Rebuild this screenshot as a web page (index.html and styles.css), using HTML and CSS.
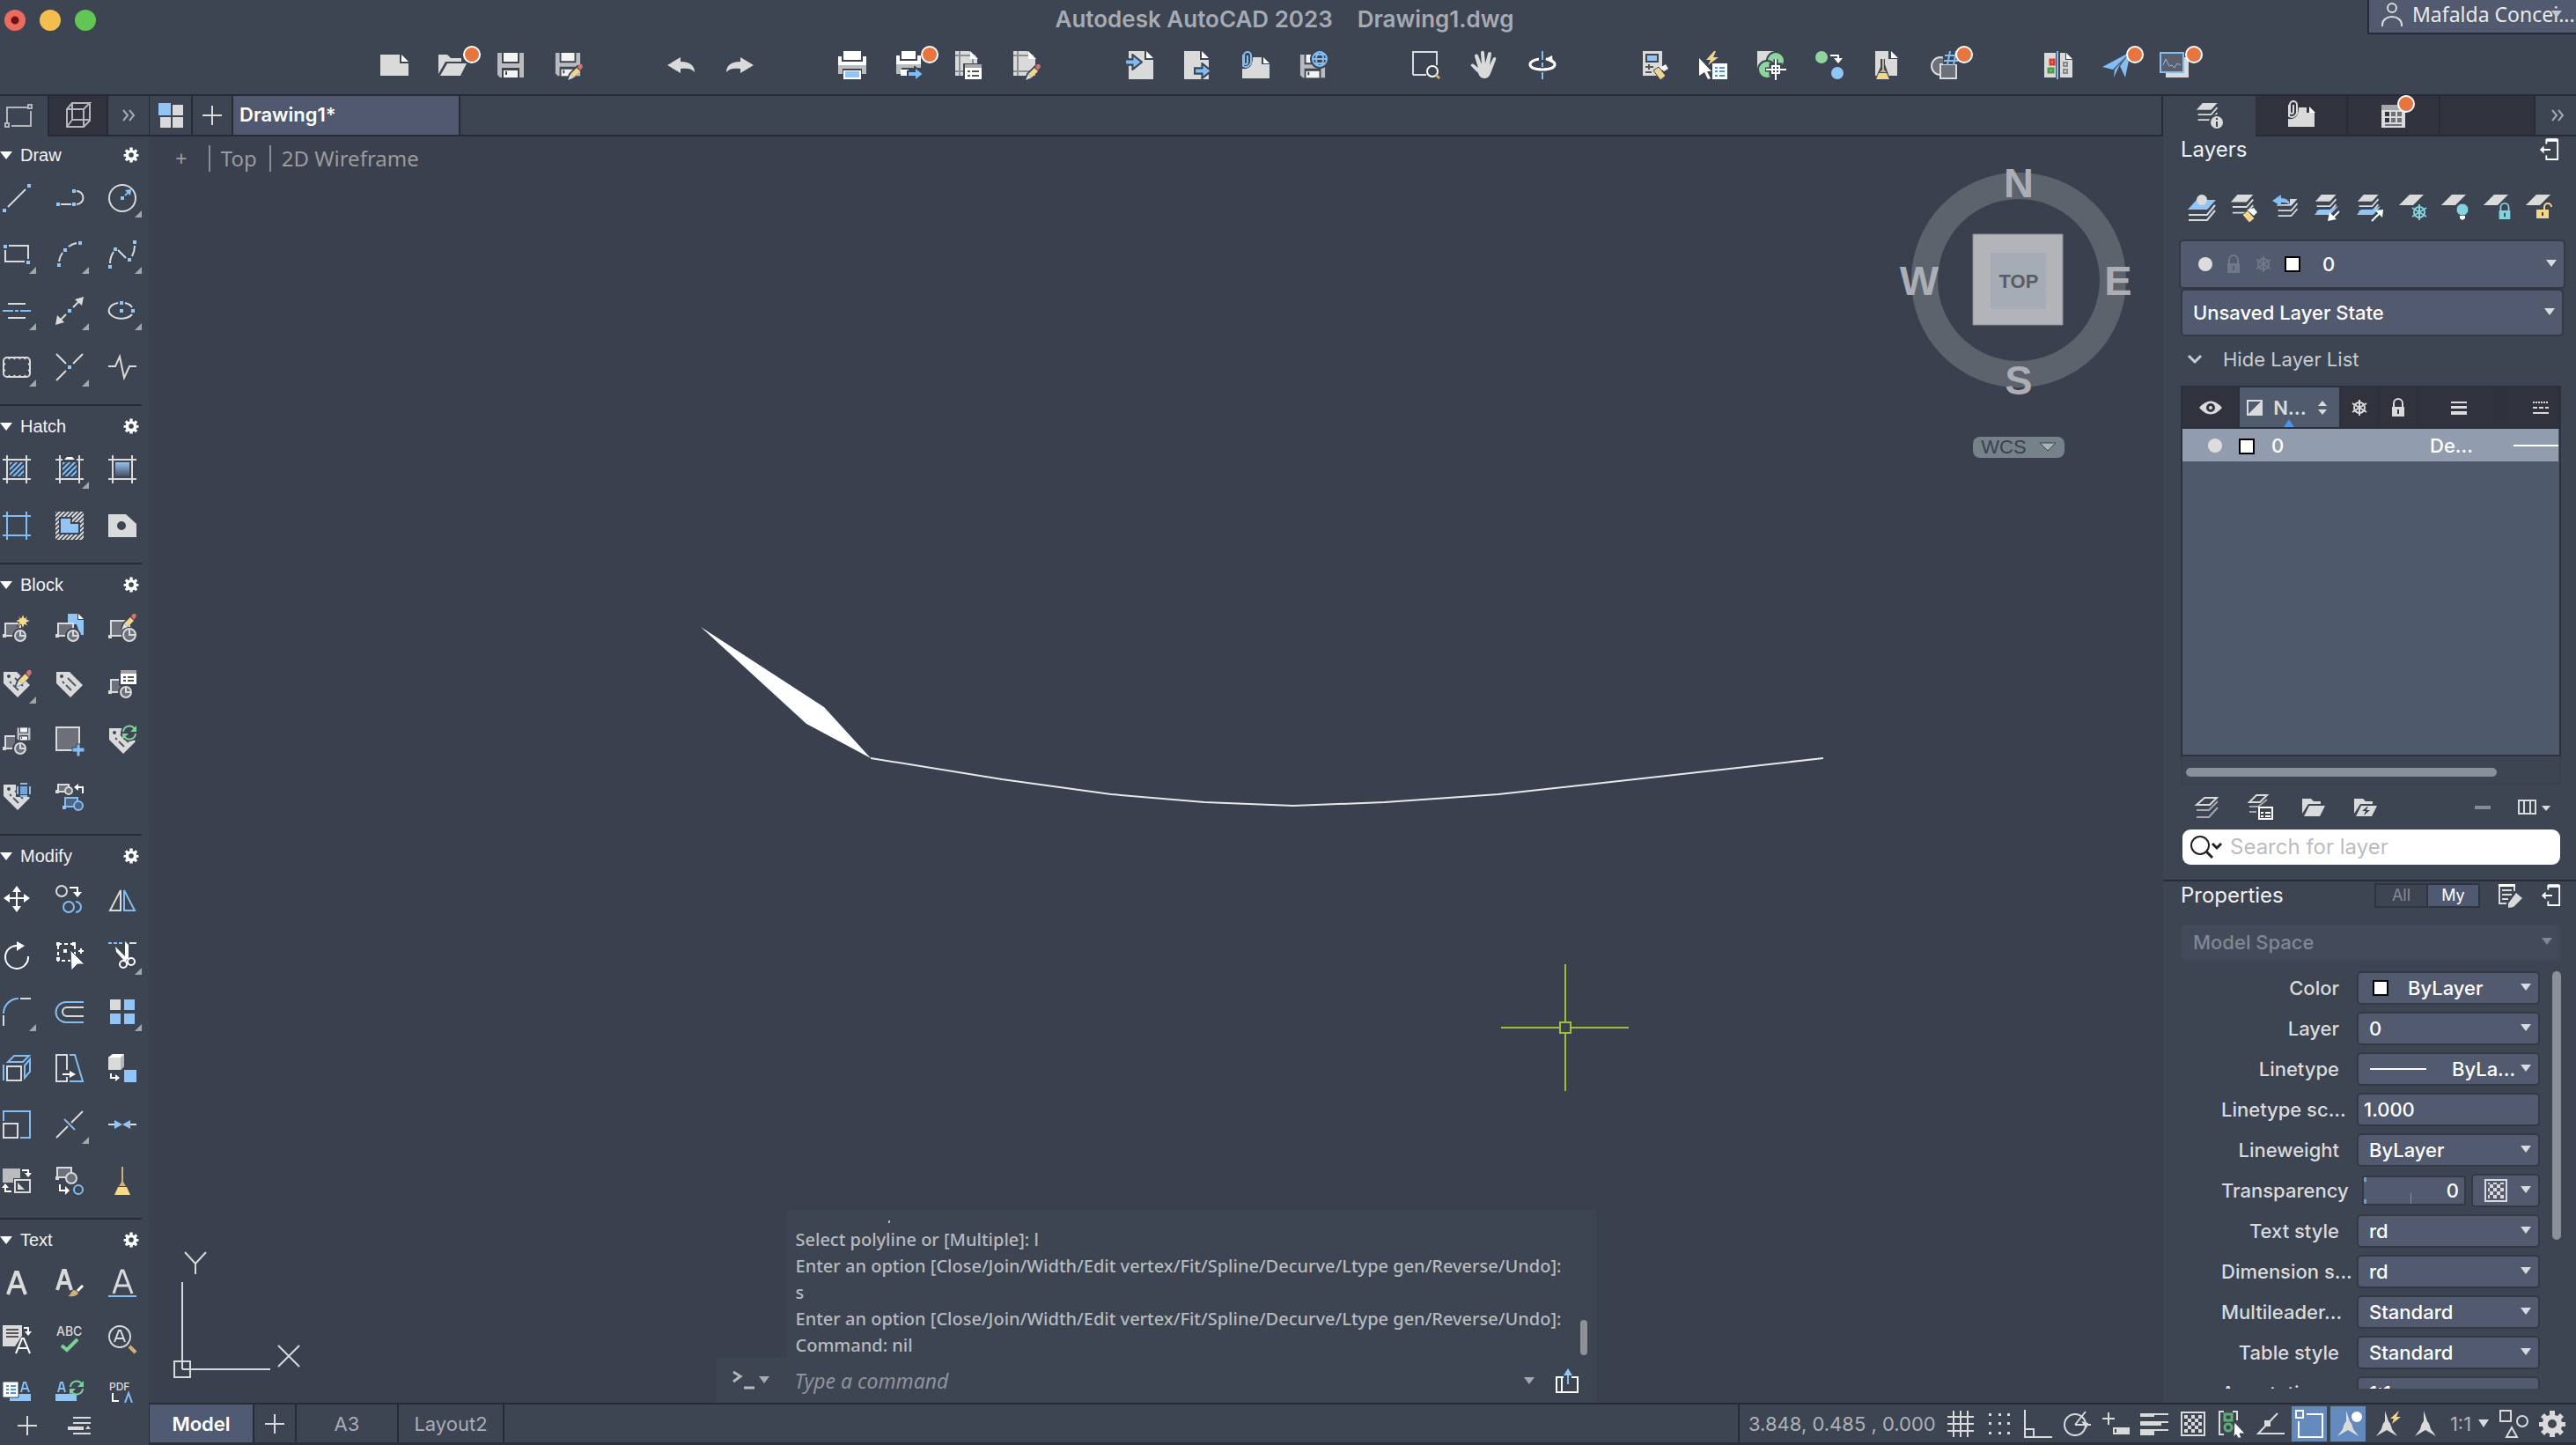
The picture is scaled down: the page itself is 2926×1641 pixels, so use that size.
FILE: index.html
```html
<!DOCTYPE html>
<html lang="en">
<head>
<meta charset="utf-8">
<title>Autodesk AutoCAD 2023 - Drawing1.dwg</title>
<link rel="stylesheet" href="styles.css">
</head>
<body>
<svg class="defs" aria-hidden="true">
  <defs>
    <pattern id="hb" width="6" height="6" patternUnits="userSpaceOnUse"><path class="sb" d="M-1 7L7 -1M-1 1L1 -1M5 7L7 5"/></pattern>
    <pattern id="hg" width="5" height="5" patternUnits="userSpaceOnUse"><path class="s" d="M-1 6L6 -1M-1 1L1 -1M4 6L6 4"/></pattern>
    <pattern id="chk" x="6" y="6" width="8" height="8" patternUnits="userSpaceOnUse"><path class="f" d="M0 0h4v4H0zM4 4h4v4H4z"/></pattern>
    <linearGradient id="gr" x1="0" y1="0" x2="0" y2="1"><stop offset="0" stop-color="#91c5f5"/><stop offset="1" stop-color="#4a4f5c"/></linearGradient>
    <symbol id="more" viewBox="0 0 40 40"><path fill="#a5a7ab" d="M38 30v8h-8z"/></symbol>
    <symbol id="gear" viewBox="0 0 32 32"><path fill-rule="evenodd" d="M13 1h6v5l3 1 3-3 4 4-3 3 1 3h4v5h-4l-1 3 3 3-4 4-3-3-3 1v4h-6v-4l-3-1-3 3-4-4 3-3-1-3H1v-5h4l1-3-3-3 4-4 3 3 3-1zM16 11a5 5 0 1 0 0 10a5 5 0 0 0 0-10z"/></symbol>
    <symbol id="frame" viewBox="0 0 32 32"><path d="M0 5H32M0 27H32M5 0V32M27 0V32" fill="none" stroke="currentColor" stroke-width="2"/></symbol>
    <symbol id="blk" viewBox="0 0 32 32"><path class="sf" d="M3 11H20V25H3z"/><path class="f" d="M0 23h4v4H0z"/><circle class="cut" cx="20" cy="25" r="8"/><circle class="sf" cx="20" cy="25" r="6"/><path class="s1" d="M20 19v6h6"/></symbol>
    <symbol id="pencil" viewBox="0 0 18 18"><path class="cut" d="M1 17L3 11 12 2h3l1 3L7 15z"/><path fill="#f3d58b" d="M4 11L11 4l4 4-7 7z"/><path fill="#e06c6c" d="M12 3l2-3h3l1 3-3 4z"/><path fill="#d9e2ea" d="M4 11l4 4-7 3z"/></symbol>
    <symbol id="tag" viewBox="0 0 32 32"><path class="f" fill-rule="evenodd" d="M1 2H16L31 17 17 31 1 15zM7 5a2 2 0 1 0 0 4a2 2 0 0 0 0-4z"/><path d="M14 9l9 9M8 13l2 2M12 17l6 6" stroke="#555a64" stroke-width="2"/></symbol>
    <symbol id="disk" viewBox="0 0 32 32"><path fill="#b9bbbf" d="M1 2h30v28H4l-3-3z"/><path class="kf" d="M6 2h20v12H6zM6 19h20v11H6z"/><path fill="#f4f4f4" d="M8 2h16v10H8zM8 22h16v8H8z"/><path class="kf" d="M10 23h2v4h-2z"/></symbol>
    <symbol id="layers" viewBox="0 0 32 32"><path class="f" d="M9 1H28L20 10H1z"/><path class="s" stroke-width="3" d="M3 16H20L28 7M3 23H20L28 14"/></symbol>
    <symbol id="plane" viewBox="0 0 32 32"><path class="f" d="M12 1H28L16 13H0z"/></symbol>
    <symbol id="flake" viewBox="0 0 20 20"><path fill="none" stroke="currentColor" stroke-width="2" d="M10 1V19M2 5L18 15M2 15L18 5"/><circle cx="10" cy="10" r="6" fill="none" stroke="currentColor" stroke-width="2"/></symbol>
    <symbol id="lock" viewBox="0 0 20 22"><path fill="none" stroke="currentColor" stroke-width="2" d="M5 11V6a5 5 0 0 1 10 0v5"/><path fill="currentColor" fill-rule="evenodd" d="M3 10h14v11H3zM9 13v5h2v-5z"/></symbol>
    <symbol id="badge" viewBox="0 0 20 20"><circle cx="10" cy="10" r="9" fill="#e67540" stroke="#fff" stroke-width="2"/></symbol>
    <symbol id="dock" viewBox="0 0 24 30"><path class="sw" d="M8 8V3H22V27H8V22M2 15H13"/><path class="fw" d="M0 15l5-5v10z"/><path class="fw" d="M8 1h14v4H8z"/></symbol>
    <symbol id="arrowb" viewBox="0 0 20 18"><path fill="#7fbcf5" stroke="#3d4452" stroke-width="2" d="M1 6h8V1l10 8-10 8v-5H1z"/></symbol>
    <symbol id="dbl" viewBox="0 0 16 14"><path fill="none" stroke="#a4a8af" stroke-width="2" d="M2 1l5 6-5 6M9 1l5 6-5 6"/></symbol>
    <symbol id="compass" viewBox="0 0 32 32"><path class="f" d="M14 1l4 12c3 3 3 6 4 9l6 8-12-7-12 7 6-8c1-3 1-6 4-9z"/></symbol>
    <symbol id="recycle" viewBox="0 0 18 18"><path fill="none" stroke="#7fd09a" stroke-width="2" d="M2 8a7 7 0 0 1 13-3M16 10a7 7 0 0 1-13 3"/><path fill="#7fd09a" d="M17 1v7h-7zM1 17v-7h7z"/></symbol>
  </defs>
</svg>

<header class="top">
  <div class="titlebar">
    <div class="lights"><button class="light red" aria-label="Close"></button><button class="light amber" aria-label="Minimize"></button><button class="light green" aria-label="Zoom"></button></div>
    <h1><span>Autodesk AutoCAD 2023</span><span>Drawing1.dwg</span></h1>
    <button class="user"><svg width="24" height="30" viewBox="0 0 24 30"><g class="s"><circle cx="12" cy="8" r="5"/><path d="M1 29V27a11 9 0 0 1 22 0v2"/></g></svg><span>Mafalda Concei...</span><i class="tri"></i></button>
  </div>
  <nav class="toolbar" aria-label="Standard">
    <div class="group">
      <button aria-label="New"><svg viewBox="0 0 32 32"><path class="f" d="M0 4H22V14H32V28H0z"/><path class="fw" d="M24 4l8 8h-8z"/></svg></button>
      <button aria-label="Open"><svg viewBox="0 0 32 32"><path class="f" d="M0 4H10l4 4H26v4H8L0 26z"/><path class="f" d="M10 14H32L25 28H2z"/><use href="#badge" x="28" y="-6" width="20" height="20"/></svg></button>
      <button aria-label="Save"><svg viewBox="0 0 32 32"><use href="#disk" width="32" height="32"/></svg></button>
      <button aria-label="Save As"><svg viewBox="0 0 32 32"><use href="#disk" width="30" height="30"/><use href="#pencil" x="14" y="15" width="18" height="18"/></svg></button>
    </div>
    <div class="group">
      <button aria-label="Undo"><svg viewBox="0 0 32 32"><path class="f" d="M0 16L15 7v5c10 0 16 4 16 12-3-4-8-5-16-4v5z"/></svg></button>
      <button aria-label="Redo"><svg viewBox="0 0 32 32"><path class="f" d="M32 16L17 7v5C7 12 1 16 1 24c3-4 8-5 16-4v5z"/></svg></button>
    </div>
    <div class="group">
      <button aria-label="Print"><svg viewBox="0 0 32 32"><path class="fw" d="M6 0H26V10H6zM0 6H4V12H28V6H32V16H0z"/><path fill="#b9bbbf" d="M0 16H32V26H27V20H5V26H0z"/><path class="fw" d="M6 22H26V32H6z"/><path class="fb" d="M8 23H24V30H8z"/></svg></button>
      <button aria-label="Publish"><svg viewBox="0 0 32 32"><path class="fw" d="M6 0H22V9H6zM0 5H4V11H24V5H28V15H0z"/><path fill="#b9bbbf" d="M0 15H28V19H6V26H0z"/><path class="fw" d="M5 21H14V28H5z"/><use href="#arrowb" x="12" y="17" width="20" height="18"/><use href="#badge" x="28" y="-6" width="20" height="20"/></svg></button>
      <button aria-label="Page setup"><svg viewBox="0 0 32 32"><path class="f" d="M1 0H17L26 9V28H1z"/><path d="M6 0V28M1 5H24M1 23H26M21 5V28" stroke="#8d8f93" stroke-width="2"/><path class="fw" d="M18 0l9 9h-9z"/><path class="kf" d="M10 14H32V32H10z"/><path fill="#a4a6aa" d="M12 15H31V19H12z"/><path class="fw" d="M12 19H31V32H12z"/><path d="M15 23h3M20 23h8M15 28h3M20 28h8" stroke="#555" stroke-width="2"/></svg></button>
      <button aria-label="Edit page"><svg viewBox="0 0 32 32"><path class="f" d="M1 0H17L26 9V28H1z"/><path d="M6 0V28M1 5H24M1 23H26" stroke="#8d8f93" stroke-width="2"/><path class="fw" d="M18 0l9 9h-9z"/><use href="#pencil" x="14" y="15" width="18" height="18"/></svg></button>
    </div>
    <div class="group">
      <button aria-label="Import"><svg viewBox="0 0 32 32"><path class="f" d="M4 0H22V10H32V32H4z"/><path class="fw" d="M24 0l8 8h-8z"/><use href="#arrowb" x="-1" y="3" width="21" height="19"/></svg></button>
      <button aria-label="Export"><svg viewBox="0 0 32 32"><path class="f" d="M1 0H19V10H29V32H1z"/><path class="fw" d="M21 0l8 8h-8z"/><use href="#arrowb" x="12" y="13" width="21" height="19"/></svg></button>
      <button aria-label="Attach"><svg viewBox="0 0 32 32"><path class="f" d="M1 20c8 1 12-3 12-13H23v8h9V31H1z"/><path class="fw" d="M25 7l7 7h-7z"/><path class="sb" d="M7 5v8a2 2 0 0 1-4 0V5a4 4 0 0 1 8 0v8a6 6 0 0 1-9 4V4"/></svg></button>
      <button aria-label="Save to web"><svg viewBox="0 0 32 32"><use href="#disk" x="0" y="2" width="30" height="30"/><circle class="kf" cx="23" cy="9" r="11"/><g fill="none" stroke="#83bdf2" stroke-width="2"><circle cx="23" cy="9" r="8"/><ellipse cx="23" cy="9" rx="4" ry="8"/><path d="M15 9H31M17 4H29M17 14H29"/></g></svg></button>
    </div>
    <div class="group">
      <button aria-label="Zoom window"><svg viewBox="0 0 32 32"><path class="s1" d="M1 27V1H28V16M1 27H16"/><circle class="sw" cx="23" cy="23" r="6"/><path d="M27 27l4 4" stroke="#d2ad7e" stroke-width="3"/></svg></button>
      <button aria-label="Pan"><svg viewBox="0 0 32 32"><path class="f" d="M8 24L1 17c-1-2 1-3 3-2l5 4L5 6c0-3 3-3 4-1l4 10-1-13c0-3 4-3 4 0l1 12 3-11c1-3 4-2 4 0l-2 13 4-8c2-2 4-1 3 2l-5 13c-2 6-4 8-8 8-4 0-6-3-8-8z"/></svg></button>
      <button aria-label="Orbit"><svg viewBox="0 0 32 32"><path class="sb" d="M16 0V10M16 13v5M16 24V32"/><path d="M12 9C-2 11-2 21 16 21S34 11 20 9" fill="none" stroke="#fff" stroke-width="3"/><path class="fw" d="M27 5l1 9-9-5z"/></svg></button>
    </div>
    <div class="group">
      <button aria-label="Properties match"><svg viewBox="0 0 32 32"><path class="f" d="M2 0H24V28H2z"/><path class="kf" d="M5 3H20V13H5z"/><path class="fb" d="M7 5H18V11H7z"/><path d="M5 18H14M5 24H12M9 15v6" stroke="#555" stroke-width="2"/><path fill="#f3d58b" stroke="#3d4452" d="M14 22l6-4 8 10-6 5z"/><path class="fw" d="M20 17l3 1 5-3 3 5-5 3z"/></svg></button>
      <button aria-label="Quick select"><svg viewBox="0 0 32 32"><path class="fw" d="M0 8L14 23H9l4 8-3 1-4-8-6 4z"/><path fill="#f3d58b" d="M17 0L8 10h5L10 16 22 7h-6l3-7z"/><path class="fw" d="M15 14H32V32H15z"/><path d="M18 19h3M23 19h6M18 23h3M23 23h6M18 28h3M23 28h6" stroke="#4b93d8" stroke-width="2"/></svg></button>
      <button aria-label="Overlay"><svg viewBox="0 0 32 32"><path class="f" d="M0 0H20L0 20z"/><g fill="#8fd5a0" stroke="#3d4452" stroke-width="2"><circle cx="21" cy="11" r="10"/><circle cx="11" cy="21" r="10"/></g><path d="M21 9V33M9 21H33M16 16h10v10H16z" fill="none" stroke="#3d4452" stroke-width="5"/><path class="sw" d="M21 9V33M10 21H33M17 17h8v8h-8z"/></svg></button>
      <button aria-label="Replace"><svg viewBox="0 0 32 32"><circle cx="7" cy="7" r="7" fill="#8fd5a0"/><circle class="fb" cx="25" cy="25" r="7"/><path class="sw" d="M17 5H26V10"/><path class="fw" d="M21 8h10l-5 6z"/></svg></button>
      <button aria-label="Purge"><svg viewBox="0 0 32 32"><path class="f" d="M2 0H17V9H27V28H2z"/><path class="fw" d="M20 0l8 8h-8z"/><path class="kf" d="M8 9H13V15L19 32H2L8 18z"/><path d="M10 9h2v12l3 3H7l3-3z" fill="#d2ad7e"/><path fill="#f3d58b" d="M6 25H15L18 32H3z"/></svg></button>
      <button aria-label="Count"><svg viewBox="0 0 32 32"><circle class="sf" cx="10" cy="17" r="10"/><path class="sf" d="M10 15H28V31H10z"/><path class="kf" d="M13 0H32V15H13z"/><path class="sb" d="M21 0L18 16M28 0L25 16M15 5H31M14 11H30"/><use href="#badge" x="27" y="-6" width="20" height="20"/></svg></button>
    </div>
    <div class="group">
      <button aria-label="Compare"><svg viewBox="0 0 32 32"><path class="f" d="M0 2H13V30H0zM18 2H24V10H32V30H18z"/><path class="fw" d="M25 2l7 7h-7z"/><path stroke="#7fbcf5" stroke-width="2" d="M15 0V32"/><path d="M7 10h4v5H7z" fill="none" stroke="#e23b2e" stroke-width="3"/><path d="M5 20h5v4H5z" fill="none" stroke="#4c9c45" stroke-width="3"/><path d="M22 13h4v4h-4zM22 21h4v4h-4z" fill="none" stroke="#888" stroke-width="2"/></svg></button>
      <button aria-label="Share"><svg viewBox="0 0 32 32"><path fill="#83bdf2" d="M0 18L32 1 12 21zM14 21L32 1 20 15l-7 15zM20 17L32 1 26 30z"/><use href="#badge" x="27" y="-6" width="20" height="20"/></svg></button>
      <button aria-label="Monitor"><svg viewBox="0 0 32 32"><path class="f" d="M6 7H32V30H6z"/><path fill="#5a5f6b" stroke="#83bdf2" stroke-width="2" d="M0 2H26V24H0z"/><path fill="none" stroke="#83bdf2" d="M3 16l3-7 4 8 3-1 3 3 3-5 4 2"/><use href="#badge" x="28" y="-6" width="20" height="20"/></svg></button>
    </div>
  </nav>
</header>

<div class="workspace">
  <aside class="tools">
    <div class="ptabs">
      <button class="on" aria-label="Drafting"><svg width="34" height="28" viewBox="0 0 34 28"><g fill="none" stroke="#b4b6ba" stroke-width="2"><path d="M7 4H27M31 8V25H9M4 21V4H7"/><path d="M28 1h4v4h-4zM2 22h4v4H2z"/></g></svg></button>
      <button class="dark" aria-label="Modeling"><svg width="28" height="30" viewBox="0 0 28 30"><path fill="none" stroke="#b4b6ba" stroke-width="2" d="M1 8H20V28H1zM1 8l6-7H27l-7 7M27 1V21l-7 7M7 1V20l-6 8M7 20H27"/></svg></button>
      <button aria-label="More palettes"><svg width="16" height="14"><use href="#dbl"/></svg></button>
    </div>
    <div class="sections">
      <section>
        <h2><i class="tri"></i>Draw<button aria-label="Draw settings"><svg><use href="#gear"/></svg></button></h2>
        <div class="grid">
          <button aria-label="Line"><svg><path class="s" d="M6 26L26 6"/><path class="fb" d="M0 28h4v4H0zM28 0h4v4h-4z"/></svg></button>
          <button aria-label="Polyline"><svg><path class="s" d="M6 23H18M24 8a7 7 0 0 1 0 15"/><path class="fb" d="M1 21h4v4H1zM19 21h4v4h-4zM19 6h4v4h-4z"/></svg></button>
          <button aria-label="Circle"><svg><circle class="s" cx="16" cy="16" r="15"/><path class="fb" d="M14 14h4v4h-4zM26 6l-1 7-6-6z"/><path class="sb" d="M19 13l4-4"/><use href="#more"/></svg></button>
          <button aria-label="Rectangle"><svg><path class="s" d="M7 6H29V21M3 11V24H25"/><path class="fb" d="M1 5h4v4H1zM27 23h4v4h-4z"/><use href="#more"/></svg></button>
          <button aria-label="Arc"><svg><path class="s" d="M4 24Q5 18 8 14M15 7Q19 4 24 3"/><path class="fb" d="M2 26h4v4H2zM9 9h4v4H9zM26 1h4v4h-4z"/><use href="#more"/></svg></button>
          <button aria-label="Spline"><svg><path class="s" d="M2 26Q2 19 6 13M11 11L20 20M27 18Q30 12 30 6"/><path class="fb" d="M0 28h4v4H0zM6 8h4v4H6zM22 20h4v4h-4zM28 0h4v4h-4z"/><use href="#more"/></svg></button>
          <button aria-label="Construction lines"><svg><path class="s" d="M6 8H26M6 24H26"/><path class="sb" d="M0 16H12M14 16h4M20 16H32"/><use href="#more"/></svg></button>
          <button aria-label="Ray"><svg><path class="s" d="M4 28L12 20M20 12L28 4"/><path class="f" d="M32 0L30 10 22 3zM0 32L2 21l8 8z"/><path class="fb" d="M14 14h4v4h-4z"/><use href="#more"/></svg></button>
          <button aria-label="Ellipse"><svg><path class="s" d="M11 7A14 9 0 1 0 27 20M27 12A14 9 0 0 0 19 7"/><path class="fb" d="M13 5h4v4h-4zM13 14h4v4h-4zM26 14h4v4h-4z"/><use href="#more"/></svg></button>
          <button aria-label="Revision cloud"><svg><rect class="s" x="1" y="5" width="30" height="22" rx="4"/><path d="M8 5l-1 2M14 5l-1 2M20 5l-1 2M26 5l-1 2M8 27l-1-2M14 27l-1-2M20 27l-1-2M26 27l-1-2M1 12l2 1M1 19l2 1M31 12l-2 1M31 19l-2 1" class="s"/><use href="#more"/></svg></button>
          <button aria-label="Points"><svg><path class="s" d="M1 1L12 12M31 1L20 12M1 31L12 20"/><path class="fb" d="M14 14h4v4h-4z"/><use href="#more"/></svg></button>
          <button aria-label="Break symbol"><svg><path class="s" d="M0 15H8L13 4L18 28L24 15H32"/></svg></button>
        </div>
      </section>
      <section>
        <h2><i class="tri"></i>Hatch<button aria-label="Hatch settings"><svg><use href="#gear"/></svg></button></h2>
        <div class="grid">
          <button aria-label="Hatch"><svg><use href="#frame" width="32" height="32"/><path fill="url(#hb)" d="M8 8H24V24H8z"/></svg></button>
          <button aria-label="Hatch edit"><svg><use href="#frame" width="32" height="32"/><path fill="url(#hb)" d="M8 8H24V24H8z"/><path class="kf" d="M8 2h16v5H8z"/><path class="fw" d="M10 5l3-3h6l3 3z"/><use href="#more"/></svg></button>
          <button aria-label="Gradient"><svg><use href="#frame" width="32" height="32"/><path fill="url(#gr)" d="M8 8H24V24H8z"/></svg></button>
          <button class="blue" aria-label="Boundary"><svg><use href="#frame" width="32" height="32"/></svg></button>
          <button aria-label="Region hatch"><svg><path fill="url(#hg)" d="M0 0H32V32H0z"/><path class="fb" stroke="#3d4452" stroke-width="2" d="M5 7H18V13H27V25H5z"/></svg></button>
          <button aria-label="Wipeout"><svg><path class="f" fill-rule="evenodd" d="M0 3H20L32 14V29H0zM15 11a5 5 0 1 0 0 10a5 5 0 0 0 0-10z"/></svg></button>
        </div>
      </section>
      <section>
        <h2><i class="tri"></i>Block<button aria-label="Block settings"><svg><use href="#gear"/></svg></button></h2>
        <div class="grid">
          <button aria-label="Create block"><svg><use href="#blk" width="32" height="32"/><path fill="#f8d98a" stroke="#3d4452" d="M23 0l2 5 4-3-2 4 5 2-5 2 2 5-4-3-2 5-2-5-5 3 3-5-5-2 5-2-2-4 4 3z"/></svg></button>
          <button aria-label="Insert block"><svg><path class="fb" d="M14 0H25V7H32V24H28L24 12H14z"/><path class="fw" d="M26 0l6 6h-6z"/><use href="#blk" width="32" height="32"/></svg></button>
          <button aria-label="Edit block"><svg><path class="sf" d="M3 8H24V25H3z"/><path class="f" d="M0 24h4v4H0z"/><circle class="cut" cx="24" cy="24" r="8"/><circle class="sf" cx="24" cy="24" r="7"/><path class="s1" d="M24 17v7h7"/><use href="#pencil" x="14" y="0" width="18" height="18"/></svg></button>
          <button aria-label="Edit attributes"><svg><use href="#tag" width="32" height="32"/><use href="#pencil" x="14" y="0" width="19" height="19"/><use href="#more"/></svg></button>
          <button aria-label="Define attributes"><svg><use href="#tag" width="32" height="32"/></svg></button>
          <button aria-label="Block attributes"><svg><use href="#blk" width="32" height="32"/><path class="kf" d="M12 0H32V18H12z"/><path fill="#9fa1a5" d="M14 0H32V4H14z"/><path class="fw" d="M14 4H32V16H14z"/><path d="M17 8h3M22 8h7M17 12h3M22 12h7" stroke="#555" stroke-width="2"/></svg></button>
          <button aria-label="Write block"><svg><use href="#blk" width="32" height="32"/><path class="kf" d="M14 0H32V18H14z"/><use href="#disk" x="16" y="0" width="16" height="17"/></svg></button>
          <button aria-label="Set base point"><svg><path class="sf" d="M1 1H27V27H1z"/><path fill="#83bdf2" stroke="#3d4452" d="M24 20h4v4h5v5h-5v5h-4v-5h-5v-5h5z"/></svg></button>
          <button aria-label="Sync attributes"><svg><use href="#tag" width="32" height="32"/><circle class="kf" cx="24" cy="7" r="10"/><use href="#recycle" x="15" y="-2" width="18" height="18"/></svg></button>
          <button aria-label="Block attribute manager"><svg><use href="#tag" width="32" height="32"/><path class="kf" d="M15 0H32V16H15z"/><path fill="#6fa6dc" d="M20 4h8v9h-8z"/><path class="sb" d="M20 1h8M20 15h8M17 4v9M31 4v9"/></svg></button>
          <button aria-label="Replace block"><svg><path class="sf" d="M3 2H15V10H3z"/><path class="f" d="M0 8h4v4H0z"/><circle class="sf" cx="15" cy="9" r="4"/><path class="sw" d="M24 5H31V12"/><path class="fw" d="M21 5l5-4v8z"/><path fill="#4f6482" stroke="#83bdf2" stroke-width="2" d="M11 17H25V27H11z"/><path class="fb" d="M8 26h4v4H8z"/><circle cx="26" cy="26" r="5" fill="#4f6482" stroke="#83bdf2" stroke-width="2"/></svg></button>
        </div>
      </section>
      <section>
        <h2><i class="tri"></i>Modify<button aria-label="Modify settings"><svg><use href="#gear"/></svg></button></h2>
        <div class="grid">
          <button aria-label="Move"><svg><path class="sw" d="M16 5V27M5 15H27"/><path class="fw" d="M16 1l5 7H11zM16 31l5-7H11zM1 15l7-5v10zM31 15l-7-5v10z"/></svg></button>
          <button aria-label="Copy"><svg><circle class="s" cx="7" cy="7" r="6"/><path class="sw" d="M16 3H25V8"/><path class="fw" d="M20 8h10l-5 6z"/><circle class="sb" cx="15" cy="25" r="6"/><path class="sb" d="M23 19a6 6 0 1 1 0 12"/></svg></button>
          <button aria-label="Mirror"><svg><path class="s" d="M14 6V29H2z"/><path class="sb" d="M18 6V29H30z"/></svg></button>
          <button aria-label="Rotate"><svg><path class="sw" d="M17 5A13 13 0 1 0 29 17"/><path class="fw" d="M16 0l9 5-9 6z"/></svg></button>
          <button aria-label="Stretch"><svg><path class="sw" stroke-dasharray="4 3" d="M3 3H22V22H3z"/><path class="fw" stroke="#3d4452" d="M17 10L33 26h-8l-7 7z"/><path class="fw" d="M1 1h4v4H1zM19 1h4v4h-4zM1 18h4v4H1zM9 9h4v4H9z"/><path class="sw" d="M29 8v6M26 11h6"/></svg></button>
          <button aria-label="Trim"><svg><path class="sb" stroke-dasharray="4 2" d="M0 2H16"/><path class="s" d="M24 2h8"/><path class="fw" d="M8 6L22 20l-3 3L9 12zM19 0l4 4v16h-4z"/><circle class="sw" cx="17" cy="26" r="4"/><circle class="sw" cx="26" cy="23" r="4"/><use href="#more"/></svg></button>
          <button aria-label="Fillet"><svg><path class="sb" d="M1 18A17 17 0 0 1 18 1"/><path class="s" d="M20 1H32M1 20V32"/><use href="#more"/></svg></button>
          <button aria-label="Offset"><svg><path class="sb" d="M32 5H12a11 11 0 0 0 0 23H32"/><path class="s" d="M32 11H13a5 5 0 0 0 0 10H32"/></svg></button>
          <button aria-label="Array"><svg><path class="f" d="M2 2H14V14H2z"/><path class="fb" d="M18 2H30V14H18zM2 18H14V30H2zM18 18H30V30H18z"/><use href="#more"/></svg></button>
          <button aria-label="Extrude"><svg><path class="s" d="M5 14H21V30H5z"/><path class="sb" d="M1 12V30M6 9L13 2H30L23 9zM25 13L31 6V20L25 27z"/></svg></button>
          <button aria-label="Taper"><svg><path class="s" d="M13 18V1H1V31H13V26"/><path class="sb" d="M16 1H22L31 31H16"/><path class="sw" d="M8 23H18"/><path class="fw" d="M23 23l-7-4v8z"/></svg></button>
          <button aria-label="Box"><svg><path class="f" d="M0 4L5 0H18V14L14 18H0z"/><path class="fw" d="M0 4L5 0H18L14 4z"/><path fill="#b4b6ba" d="M18 0V14L14 18V4z"/><path class="fb" d="M18 18H32V32H18z"/><path class="sw" d="M3 22V27H8"/><path class="fw" d="M13 27l-5-4v8z"/></svg></button>
          <button aria-label="Scale"><svg><path class="sb" d="M1 12V1H31V31H20"/><path class="s" d="M1 15H17V31H1z"/></svg></button>
          <button aria-label="Break"><svg><path class="s" d="M1 31L14 18M18 14L31 1"/><path class="sb" d="M10 10L22 22"/><use href="#more"/></svg></button>
          <button aria-label="Join"><svg><path class="s" d="M0 16H7M25 16h7"/><path class="fb" d="M7 11l9 5-9 5zM25 11l-9 5 9 5z"/></svg></button>
          <button aria-label="Change space"><svg><path fill="#b9bbbf" d="M0 2H20V13H12V18H0z"/><path class="sw" d="M22 4H29V8M3 24v4H10"/><path class="fw" d="M25 7h8l-4 5zM-1 24h8l-4-5z"/><path class="s" d="M14 15H31V29H14z"/><path class="f" d="M17 18l8 8h-8z"/></svg></button>
          <button aria-label="Explode"><svg><path class="sf" d="M2 1H18V12H2z"/><circle class="sf" cx="18" cy="13" r="6"/><path class="f" d="M0 11h4v4H0z"/><path class="sw" d="M5 20V27H11"/><path class="fw" d="M16 27l-5-5v10z"/><circle class="sb" cx="26" cy="26" r="5"/></svg></button>
          <button aria-label="Overkill"><svg><path d="M15 0h2v17l3 5h-8l3-5z" fill="#d2ad7e"/><path fill="#f7d98e" d="M11 23H21L25 32H7z"/></svg></button>
        </div>
      </section>
      <section>
        <h2><i class="tri"></i>Text<button aria-label="Text settings"><svg><use href="#gear"/></svg></button></h2>
        <div class="grid">
          <button aria-label="Multiline text"><svg><path class="ga" d="M6 29L15 4h2L26 29M10 20H22"/></svg></button>
          <button aria-label="Text style"><svg><path class="ga" d="M2 24L9 2h2L18 24M5 16H15"/><path d="M25 25l6-6" stroke="#fff" stroke-width="3"/><path fill="#d2ad7e" d="M14 31c4-1 3-7 8-7l4 3c-1 4-7 5-12 4z"/></svg></button>
          <button aria-label="Single line text"><svg><path class="ga thin" d="M6 28L15 2h2L27 28M9 19H23"/><path class="sb" d="M0 31H32"/></svg></button>
          <button aria-label="Convert text"><svg><path class="f" d="M0 0H22V12L14 24H0z"/><path d="M4 5H18M4 9H18M4 13H18" stroke="#555" stroke-width="2"/><path class="sw" d="M24 3H29V8M15 32L22 15h2L31 32M18 26H29"/><path class="fw" d="M25 7h8l-4 5z"/></svg></button>
          <button aria-label="Spell check"><svg><text x="1" y="12" font-size="14" font-weight="500">ABC</text><path d="M7 23l6 5L25 16" fill="none" stroke="#7fd09a" stroke-width="4"/></svg></button>
          <button aria-label="Find text"><svg><circle class="s" cx="13" cy="13" r="12"/><path class="s" d="M7 19L12 6h2L19 19M9 15H17"/><path d="M24 24l7 7" stroke="#d2ad7e" stroke-width="4"/></svg></button>
          <button aria-label="Field"><svg><path class="fb" d="M8 14H32V22H8z"/><path class="fw" stroke="#3d4452" d="M0 0H18V18H0z"/><path d="M4 5h3M9 5h6M4 9h3M9 9h6M4 13h3M9 13h6" stroke="#4b93d8" stroke-width="2"/><path class="sb" d="M21 12L24 1h2L30 12M22 8H28"/></svg></button>
          <button aria-label="Update field"><svg><path class="fb" d="M0 14H24V22H0z"/><path class="sb" d="M3 12L6 1h2L11 12M4 8H10"/><use href="#recycle" x="15" y="-2" width="18" height="18"/></svg></button>
          <button aria-label="PDF text"><svg><text x="1" y="10" font-size="12" font-weight="500">PDF</text><path class="sw" d="M5 13V22H12"/><path class="sb" d="M19 24L23 13 27 24"/></svg></button>
        </div>
      </section>
    </div>
    <div class="addbar">
      <button aria-label="Add palette"><svg width="22" height="22"><path class="s" d="M11 0V22M0 11H22"/></svg></button>
      <button aria-label="Palette list"><svg width="27" height="22"><path class="s" d="M6 2H26M6 8H26M0 15H18M6 20H26"/><path class="f" d="M0 12h18v4H0zM20 15l3-4 3 4z"/></svg></button>
    </div>
  </aside>

  <div class="center">
    <div class="upper">
      <main>
        <nav class="filetabs">
          <button class="home" aria-label="Start"><svg width="28" height="28"><path class="fb" d="M0 0H14V14H0z"/><path class="f" d="M16 2H28V14H16zM2 16H14V28H2zM16 16H28V28H16z"/></svg></button>
          <button class="plus" aria-label="New drawing"><svg width="22" height="22"><path class="s" d="M11 0V22M0 11H22"/></svg></button>
          <button class="file">Drawing1*</button>
        </nav>
        <div class="canvas">
          <svg class="drawing">
            <path fill="#fff" d="M627 557L767 648 820 706 747 667z"/>
            <path fill="none" stroke="#e8e8e8" stroke-width="2" d="M820 706L969 730L1093 747L1199 756L1300 760L1404 756L1533 747L1697 729L1902 706"/>
            <path fill="none" stroke="#a3bd35" stroke-width="2" d="M1536 1012H1602M1615 1012H1681M1609 940V1006M1609 1019V1084M1603 1006H1615V1018H1603z"/>
            <path fill="none" stroke="#d6d8da" stroke-width="2" d="M38 1301V1400M38 1400H138M29 1391H47V1409H29zM147 1373L171 1397M171 1373L147 1397M41 1267L53 1280M65 1267L53 1280V1292"/>
          </svg>
          <div class="viewlabel"><button>+</button><button>Top</button><button>2D Wireframe</button></div>
          <div class="viewcube">
            <svg width="270" height="290" viewBox="0 0 270 290"><circle cx="135" cy="143" r="107" fill="none" stroke="#5c636d" stroke-width="30"/><path fill="#b2b4b8" stroke="#8a8d94" d="M83 91H185V194H83z"/><path fill="#a5acb5" d="M103 112H166V176H103z"/><g class="dir"><text x="135" y="49">N</text><text x="135" y="273">S</text><text x="22" y="160">W</text><text x="248" y="160">E</text></g><text class="face" x="135" y="152">TOP</text></svg>
            <button class="wcs">WCS<svg width="20" height="12"><path fill="#aab2b8" stroke="#3a404d" d="M1 1H19L10 10z"/></svg></button>
          </div>
          <div class="command">
            <div class="history"><span class="cut-dot"></span><p>Select polyline or [Multiple]: l</p><p>Enter an option [Close/Join/Width/Edit vertex/Fit/Spline/Decurve/Ltype gen/Reverse/Undo]:</p><p>s</p><p>Enter an option [Close/Join/Width/Edit vertex/Fit/Spline/Decurve/Ltype gen/Reverse/Undo]:</p><p>Command: nil</p><i class="thumb"></i></div>
            <div class="prompt">
              <button aria-label="Recent commands"><svg width="44" height="24"><path fill="none" stroke="#b5b7bb" stroke-width="3" d="M2 2l8 5-8 6M14 20h12"/><path class="f2" d="M31 7h12l-6 8z"/></svg></button>
              <input type="text" placeholder="Type a command" aria-label="Command">
              <i class="tri grey"></i>
              <button aria-label="Expand"><svg width="26" height="28"><path class="sw" d="M9 10H1V27H25V10H18M7 10V27"/><path class="sb" d="M14 18V6"/><path class="fb" d="M9 8l5-8 5 8z"/></svg></button>
            </div>
          </div>
        </div>
      </main>

      <aside class="panel">
        <div class="rtabs">
          <button class="on" aria-label="Layers"><svg width="32" height="32"><use href="#layers" width="28" height="28"/><circle class="kf" cx="24" cy="23" r="9"/><circle class="f" cx="24" cy="23" r="7"/><path stroke="#3d4452" stroke-width="2" d="M24 18v2M24 22v6"/></svg></button>
          <button aria-label="References"><svg width="32" height="32"><path class="f" d="M1 20c8 1 12-3 12-13H22V13H31V29H1z"/><path class="fw" d="M25 6l7 7h-7z"/><path class="s" d="M7 4v8a2 2 0 0 1-4 0V4a4 4 0 0 1 8 0v9a6 6 0 0 1-9 4V4"/></svg></button>
          <button aria-label="Content"><svg width="32" height="32"><path class="f" d="M2 4H29V30H2z"/><path fill="#a4a6aa" d="M2 4H29V10H2z"/><path fill="#30333e" d="M6 12h5v5H6zM6 19h5v5H6z"/><path fill="#6e7178" d="M13 12h5v5h-5zM20 12h5v5h-5zM13 19h5v5h-5zM20 19h5v5h-5zM6 26h19v2H6z"/><use href="#badge" x="20" y="-7" width="20" height="20"/></svg></button>
          <span></span>
          <button class="last" aria-label="More panels"><svg width="16" height="14"><use href="#dbl"/></svg></button>
        </div>
        <section class="layers">
          <header><h2>Layers</h2><button aria-label="Undock"><svg width="22" height="28"><use href="#dock"/></svg></button></header>
          <div class="ltools">
            <button aria-label="Make current"><svg><path class="fb" d="M10 7H32L22 18H0z"/><circle class="f" cx="16" cy="7" r="6"/><path class="s" d="M1 24H22L31 13M1 30H22L31 19"/></svg></button>
            <button aria-label="Match layer"><svg><use href="#layers" width="30" height="30"/><path fill="#f3d58b" stroke="#3d4452" d="M14 24l6-5 8 9-6 5z"/><path class="fw" d="M19 18l3 0 5-2 4 5-4 4z"/></svg></button>
            <button aria-label="Previous layer"><svg><use href="#layers" x="4" y="5" width="28" height="28"/><path class="kf" d="M0 0h20v12H0z"/><path fill="#83bdf2" d="M0 8L10 1v4c6 0 10 3 10 8-3-3-6-3-10-3v4z"/></svg></button>
            <button aria-label="Isolate"><svg><use href="#layers" width="28" height="28"/><path class="fb" d="M5 18H17L27 14 20 24H0z"/><path d="M29 18L15 32" stroke="#3d4452" stroke-width="8"/><path class="sw" d="M28 20L19 29"/><path class="fw" d="M15 31l2-10 8 8z"/></svg></button>
            <button aria-label="Unisolate"><svg><use href="#layers" width="28" height="28"/><path class="fb" d="M5 18H17L27 14 20 24H0z"/><path d="M31 17L16 32" stroke="#3d4452" stroke-width="8"/><path class="sw" d="M17 31L27 21"/><path class="fw" d="M30 18l-1 9-8-8z"/></svg></button>
            <button class="cyan" aria-label="Freeze"><svg><use href="#plane" width="32" height="32"/><use href="#flake" x="13" y="11" width="20" height="20"/></svg></button>
            <button aria-label="Off"><svg><use href="#plane" width="32" height="32"/><circle cx="24" cy="18" r="7" fill="#84d3dc" stroke="#3d4452"/><path class="fw" d="M21 25h6v3l-3 2-3-2z"/></svg></button>
            <button class="cyan" aria-label="Lock"><svg><use href="#plane" width="32" height="32"/><use href="#lock" x="14" y="10" width="20" height="20"/></svg></button>
            <button aria-label="Unlock"><svg><use href="#plane" width="32" height="32"/><path fill="none" stroke="#f3d58b" stroke-width="2" d="M21 19v-4a4 4 0 0 1 8 0"/><path fill="#f3d58b" d="M12 18h14v10H12z"/><path class="kf" d="M18 21h2v4h-2z"/></svg></button>
          </div>
          <div class="select wide"><span class="marks"><i class="dot"></i><svg width="20" height="22"><use href="#lock"/></svg><svg width="20" height="20"><use href="#flake"/></svg><i class="swatch"></i></span><select aria-label="Current layer"><option>0</option></select></div>
          <div class="select tall"><select aria-label="Layer state"><option>Unsaved Layer State</option></select></div>
          <button class="hide"><svg width="18" height="12"><path fill="none" stroke="#c9ccd0" stroke-width="3" d="M2 2l7 7 7-7"/></svg>Hide Layer List</button>
          <div class="tablebox">
            <table>
              <colgroup><col class="c1"><col class="c2"><col class="c3"><col class="c3"><col class="c4"><col></colgroup>
              <thead><tr>
                <th><svg width="26" height="16"><path class="f" fill-rule="evenodd" d="M0 8Q13-7 26 8Q13 23 0 8zM13 3a5 5 0 1 0 0 10a5 5 0 0 0 0-10z"/><circle class="f" cx="13" cy="8" r="2"/></svg></th>
                <th class="sorted"><span><svg width="18" height="18"><path class="s" d="M1 1H17V17H1z"/><path class="f" d="M17 1V17H1z"/></svg>N...<svg width="12" height="18"><path class="f" d="M6 1l5 6H1zM6 17l5-6H1z"/></svg></span></th>
                <th><svg width="20" height="20"><use href="#flake"/></svg></th>
                <th><svg width="20" height="22"><use href="#lock"/></svg></th>
                <th><svg width="20" height="16"><path class="f" d="M1 1h18v2H1zM1 6h18v3H1zM1 12h18v4H1z"/></svg></th>
                <th><svg width="20" height="16"><path class="s" stroke-dasharray="2 1" d="M1 2h18"/><path class="s" stroke-dasharray="5 2" d="M1 8h18"/><path class="s" d="M1 14h18"/></svg></th>
              </tr></thead>
              <tbody><tr><td><i class="dot"></i></td><td><i class="swatch"></i>0</td><td></td><td></td><td>De...</td><td><i class="rule"></i></td></tr></tbody>
            </table>
          </div>
          <div class="hscroll"><i></i></div>
          <div class="lactions">
            <button aria-label="New layer"><svg width="30" height="26"><path class="s" d="M12 2H26L18 10H3z"/><path d="M3 16H17L27 6M3 24H17L27 13" fill="none" stroke="#a4a8af" stroke-width="2"/></svg></button>
            <button aria-label="Layer states"><svg width="30" height="30"><path class="s" d="M10 1H22L14 9H2z"/><path d="M2 14H12L22 6M2 20H10" fill="none" stroke="#a4a8af" stroke-width="2"/><path class="sw" d="M13 15H28V28H13z"/><path class="sw" d="M15 21h3M20 21h6M15 25h3M20 25h6"/></svg></button>
            <button aria-label="New group"><svg width="28" height="22"><path class="f" d="M1 1H11l3 3H22V7H8L1 18zM9 9H27L21 21H3z"/></svg></button>
            <button aria-label="New dynamic group"><svg width="28" height="22"><path class="f" d="M1 1H11l3 3H22V7H8L1 18zM9 9H27L21 21H3z"/><path class="kf" d="M17 9l-7 6h4l-2 5 7-6h-4z"/></svg></button>
            <button aria-label="Delete layer"><svg width="18" height="4"><path fill="#858b96" d="M0 0H18V4H0z"/></svg></button>
            <button aria-label="Columns"><svg width="38" height="18"><path class="s" d="M1 1H20V16H1zM7 1V16M14 1V16"/><path class="f" d="M27 7H37L32 13z"/></svg></button>
          </div>
          <label class="search"><svg width="38" height="28"><circle cx="12" cy="12" r="10" fill="none" stroke="#222" stroke-width="2"/><path fill="none" stroke="#222" stroke-width="3" d="M19 19l7 7M26 10l5 5 5-5"/></svg><input type="search" placeholder="Search for layer" aria-label="Search for layer"></label>
        </section>
        <section class="props">
          <header><h2>Properties</h2><div class="seg"><button>All</button><button class="on">My</button></div><button aria-label="Customize"><svg width="30" height="28"><path class="s" d="M10 23H2V2H19V9"/><path class="fw" d="M1 1h19v3H1z"/><path class="s" d="M5 8h11M5 13h11M5 18h7"/><path class="f" d="M21 11l7 6-10 10-6 1 0-5z"/></svg></button><button aria-label="Undock properties"><svg width="22" height="28"><use href="#dock"/></svg></button></header>
          <div class="select model"><select aria-label="Object" disabled><option>Model Space</option></select></div>
          <div class="rows">
            <div class="list">
              <div class="row"><label for="p1">Color</label><div class="select sw1"><span class="marks"><i class="swatch"></i></span><select id="p1"><option>ByLayer</option></select></div></div>
              <div class="row"><label for="p2">Layer</label><div class="select"><select id="p2"><option>0</option></select></div></div>
              <div class="row"><label for="p3">Linetype</label><div class="select lt"><span class="marks"><i class="rule"></i></span><select id="p3"><option>ByLa...</option></select></div></div>
              <div class="row"><label for="p4">Linetype sc...</label><input id="p4" type="text" value="1.000"></div>
              <div class="row"><label for="p5">Lineweight</label><div class="select"><select id="p5"><option>ByLayer</option></select></div></div>
              <div class="row"><label for="p6">Transparency</label><div class="trans"><input id="p6" type="text" value="0"><div class="select"><span class="marks"><svg width="26" height="26"><path class="s" d="M1 1H25V25H1z"/><path fill="url(#chk)" d="M4 4H22V22H4z"/></svg></span><select aria-label="Transparency mode"><option></option></select></div></div></div>
              <div class="row"><label for="p7">Text style</label><div class="select"><select id="p7"><option>rd</option></select></div></div>
              <div class="row"><label for="p8">Dimension s...</label><div class="select"><select id="p8"><option>rd</option></select></div></div>
              <div class="row"><label for="p9">Multileader...</label><div class="select"><select id="p9"><option>Standard</option></select></div></div>
              <div class="row"><label for="p10">Table style</label><div class="select"><select id="p10"><option>Standard</option></select></div></div>
              <div class="row"><label for="p11">Annotation s...</label><div class="select"><select id="p11"><option>1:1</option></select></div></div>
            </div>
            <i class="vthumb"></i>
          </div>
        </section>
      </aside>
    </div>
    <footer>
      <nav class="layouts"><button class="on">Model</button><button aria-label="Add layout"><svg width="22" height="22"><path class="s" d="M11 0V22M0 11H22"/></svg></button><button>A3</button><button>Layout2</button></nav>
      <div class="status">
        <span class="coords">3.848, 0.485 , 0.000</span>
        <button aria-label="Grid"><svg><path class="s" d="M8 1V31M16 1V31M24 1V31M1 8H31M1 16H31M1 24H31"/></svg></button>
        <button aria-label="Snap"><svg><path class="f" d="M4 4h3v3H4zM15 4h3v3h-3zM25 4h3v3h-3zM4 14h3v3H4zM15 14h3v3h-3zM25 14h3v3h-3zM4 25h3v3H4zM15 25h3v3h-3zM25 25h3v3h-3z"/></svg></button>
        <button aria-label="Ortho"><svg><path class="s" d="M1 0V31H32M1 22H11V31"/></svg></button>
        <button aria-label="Polar"><svg><circle class="s" cx="14" cy="17" r="12"/><path class="s" d="M14 17H32M14 17L26 2"/><path class="f" d="M21 13l8 2-2 6z"/></svg></button>
        <button aria-label="Dynamic input"><svg><path class="s" d="M8 3V17M1 10H15"/><path class="f" d="M13 20H32V28H13z"/><path class="kf" d="M15 22h2v4h-2z"/></svg></button>
        <button aria-label="Lineweight"><svg><path class="f" d="M0 4H32V6H16V8H0zM0 13H32V15H24V18H0zM0 22H32V24H16V29H0z"/></svg></button>
        <button aria-label="Transparency"><svg><path class="s" d="M3 3H29V29H3z"/><path fill="url(#chk)" d="M6 6H26V26H6z"/></svg></button>
        <button aria-label="Selection cycling"><svg><path class="s" d="M7 2H2V28H7M17 2H22V12"/><path d="M8 5h8v7H8z" fill="none" stroke="#5fae73" stroke-width="3"/><circle cx="12" cy="20" r="4" fill="none" stroke="#5fae73" stroke-width="3"/><path class="fw" stroke="#3d4452" d="M19 14L31 27h-6l2 5-4 0-2-4-3 3z"/></svg></button>
        <button aria-label="Object snap tracking"><svg><path class="s" d="M32 27H2L24 4"/><path class="f" d="M9 12h7v7H9z"/></svg></button>
        <button class="on" aria-label="Object snap"><svg><path class="sw" d="M1 1h8v8H1zM13 5H31V31H4V13"/></svg></button>
        <button class="on" aria-label="Annotation visibility"><svg><use href="#compass" width="32" height="32"/><circle class="fw" cx="26" cy="8" r="6"/></svg></button>
        <button aria-label="Auto scale"><svg><use href="#compass" width="32" height="32"/><path fill="#f3d58b" d="M30 1L20 10h4l-2 6 10-8h-5z"/></svg></button>
        <button aria-label="Annotation scale"><svg><use href="#compass" width="32" height="32"/></svg></button>
        <button class="scale">1:1<i class="tri"></i></button>
        <button aria-label="Isolate objects"><svg><path class="s" d="M1 1H13V13H1zM8 31L14 20 20 31z"/><circle class="s" cx="26" cy="13" r="6"/></svg></button>
        <button class="settings" aria-label="Customize"><svg><use href="#gear"/></svg></button>
      </div>
    </footer>
  </div>
</div>
</body>
</html>
```
FILE: styles.css
```css
:root { --bar: #3d4452; --canvas: #3a404d; --line: #262b37; --dark: #30333e; --field: #515a6e; --fg: #dadada; --blue: #91c5f5; }
* { box-sizing: border-box; }
body { margin: 0; height: 100vh; display: flex; flex-direction: column; overflow: hidden; background: var(--bar); color: #e9eaec; font: 500 22px/28px Inter, "Liberation Sans", sans-serif; }
button { font: inherit; color: inherit; background: none; border: 0; padding: 0; margin: 0; }
svg { display: block; overflow: visible; flex: none; }
h1, h2, p { margin: 0; font-weight: 500; }
.defs { position: absolute; width: 0; height: 0; }
.f, text { fill: var(--fg); } .fb { fill: var(--blue); } .fw { fill: #fff; } .kf { fill: var(--bar); } .f2 { fill: #a9abaf; }
.s, .sb, .sw { fill: none; stroke: var(--fg); stroke-width: 2; }
.sb { stroke: #83bdf2; } .sw { stroke: #fff; }
.s1 { fill: none; stroke: var(--fg); stroke-width: 2; }
.sf { fill: #6b707b; stroke: var(--fg); stroke-width: 2; }
.cut { fill: var(--bar); stroke: var(--bar); stroke-width: 2; }
.ga { fill: none; stroke: var(--fg); stroke-width: 4; }
.thin { stroke-width: 3; }
.tri { width: 0; height: 0; flex: none; border: solid transparent; border-width: 8px 6px 0; border-top-color: #d8dadd; }
.swatch { display: inline-block; width: 18px; height: 18px; background: #fff; border: 2px solid #000; flex: none; }
.dot { display: inline-block; width: 16px; height: 16px; border-radius: 50%; background: #dcdcdc; flex: none; }
.rule { display: block; height: 2px; background: #fff; }

.top { flex: none; height: 109px; border-bottom: 2px solid var(--line); }
.titlebar { display: grid; grid-template-columns: 1fr auto 1fr; height: 44px; align-items: start; }
.lights { display: flex; gap: 16px; padding: 11px 0 0 5px; }
.light { width: 24px; height: 24px; border-radius: 50%; }
.red { background: radial-gradient(circle, #6e1510 0 4px, #ec6b60 5px); } .amber { background: #f4be4f; } .green { background: #61c654; }
h1 { display: flex; gap: 28px; padding-right: 8px; font-weight: 600; font-size: 26px; line-height: 44px; color: #a6abb3; }
.user { justify-self: end; display: flex; align-items: center; gap: 11px; width: 237px; height: 39px; padding: 0 0 6px 14px; background: var(--field); border: solid var(--line); border-width: 0 0 2px 2px; font: 400 23px/30px "Noto Sans", sans-serif; white-space: nowrap; }
.user .tri { margin-left: -38px; border-top-color: #c2c5ca; }
.toolbar { display: flex; justify-content: center; gap: 96px; height: 60px; align-items: center; padding-right: 8px; }
.group { display: flex; gap: 34px; }
.group svg { width: 32px; height: 32px; }

.workspace { flex: 1; min-height: 0; display: flex; }
.tools { width: 169px; flex: none; display: flex; flex-direction: column; }
.ptabs { display: flex; height: 46px; flex: none; }
.ptabs button { display: flex; align-items: center; justify-content: center; border-bottom: 2px solid var(--line); flex: 1; }
.ptabs .on { flex: 0 0 54px; border: 0; justify-content: flex-start; padding-left: 4px; }
.ptabs .dark { flex: 0 0 69px; background: var(--dark); border-left: 2px solid var(--line); border-right: 2px solid var(--line); }
.sections { flex: 1; min-height: 0; overflow: hidden; }
.sections section { border-bottom: 2px solid var(--line); padding-bottom: 10px; margin-right: 8px; }
.sections h2 { display: flex; align-items: center; height: 40px; padding-top: 6px; font: 400 20px/28px "Liberation Sans", sans-serif; color: #f2f3f5; }
.sections section:first-child h2 { height: 38px; padding-top: 4px; }
.sections h2 .tri { border-width: 9px 7px 0; margin-right: 9px; border-top-color: #fff; }
.sections h2 button { margin-left: auto; margin-right: 3px; }
.sections h2 svg { width: 18px; height: 18px; fill: #fff; }
.grid { display: grid; grid-template-columns: repeat(3, 60px); grid-auto-rows: 64px; padding-left: 3px; margin-right: -30px; color: var(--fg); }
.grid button { display: flex; align-items: flex-start; padding-top: 16px; }
.grid svg { width: 40px; height: 40px; }
.grid .blue { color: #83bdf2; }
.addbar { flex: none; height: 48px; display: flex; align-items: center; gap: 35px; padding: 4px 0 0 20px; background: var(--bar); }

.center { flex: 1; min-width: 0; display: flex; flex-direction: column; }
.upper { flex: 1; min-height: 0; display: flex; }
main { flex: 1; min-width: 0; display: flex; flex-direction: column; }
.filetabs { flex: none; display: flex; height: 46px; border: solid var(--line); border-width: 0 2px 2px 1px; }
.filetabs button { border-right: 2px solid var(--line); display: flex; align-items: center; justify-content: center; }
.filetabs .home { width: 49px; } .filetabs .plus { width: 46px; }
.filetabs .file { width: 258px; justify-content: flex-start; padding: 0 0 2px 7px; background: #505970; font-weight: 600; font-size: 22px; color: #fff; }
.canvas { flex: 1; min-height: 0; position: relative; overflow: hidden; background: var(--canvas); display: flex; flex-direction: column; justify-content: flex-end; align-items: center; }
.drawing { position: absolute; inset: 0; width: 100%; height: 100%; }
.viewlabel { position: absolute; left: 30px; top: 10px; display: flex; align-items: center; font: 400 24px/30px "Noto Sans", sans-serif; color: #999b9f; }
.viewlabel button { line-height: 30px; height: 30px; padding: 0 14px 0 12px; border-left: 2px solid #8b8d92; }
.viewlabel button:first-child { border: 0; padding: 0 24px 0 0; }
.viewcube { position: absolute; right: 29px; top: 20px; display: flex; flex-direction: column; align-items: center; width: 270px; gap: 31px; }
.dir text { font: 700 47px "Liberation Sans", sans-serif; text-anchor: middle; fill: #abaeb4; }
.face { font: 700 22px "Liberation Sans", sans-serif; text-anchor: middle; fill: #575d68; }
.wcs { display: flex; align-items: center; gap: 14px; height: 24px; padding: 0 9px; border-radius: 8px; background: #76828a; color: #3a404d; font: 400 22px/24px "Liberation Sans", sans-serif; }
.command { position: relative; width: 999px; max-width: 100%; display: flex; flex-direction: column; align-items: flex-end; font: 400 20px/30px "Noto Sans", sans-serif; color: #b7babf; }
.history { position: relative; width: 919px; height: 168px; padding: 19px 10px 0; background: #3d4552; white-space: nowrap; }
.cut-dot { position: absolute; left: 115px; top: 12px; width: 2px; height: 3px; background: #b7babf; }
.thumb { position: absolute; right: 10px; bottom: 3px; width: 8px; height: 40px; border-radius: 4px; background: #8e9196; }
.prompt { width: 100%; height: 51px; display: flex; align-items: center; background: #3d4552; padding: 0 20px 0 17px; }
.prompt input { flex: 1; min-width: 0; margin-left: 28px; padding: 0; border: 0; background: none; font: italic 400 23px/30px "Noto Sans", sans-serif; color: #b7babf; }
.prompt input::placeholder { color: #8f939b; opacity: 1; }
.prompt .tri { margin-right: 24px; border-top-color: #a4a6aa; }

.panel { width: 469px; flex: none; display: flex; flex-direction: column; color: #d9dbde; }
.rtabs { display: flex; height: 46px; flex: none; }
.rtabs button, .rtabs span { display: flex; align-items: center; justify-content: center; flex: 0 0 105px; background: var(--dark); border: solid var(--line); border-width: 0 2px 2px 0; }
.rtabs .on { background: none; border: 0; }
.rtabs span { flex: 1; }
.rtabs .last { flex: 0 0 46px; background: var(--bar); border-right: 0; padding-left: 4px; }
.panel header { display: flex; align-items: center; height: 30px; }
.panel h2 { flex: 1; font: 400 24px/30px Inter, sans-serif; color: #f0f1f3; }
.layers { padding: 0 12px 0 20px; border-bottom: 2px solid var(--line); display: flex; flex-direction: column; height: 846px; flex: none; }
.layers header { padding-right: 7px; }
.ltools { display: flex; align-items: flex-start; gap: 16px; height: 87px; padding: 35px 0 0 8px; }
.ltools svg { width: 32px; height: 32px; }
.cyan { color: #84d3dc; }
.select { position: relative; display: flex; flex: 1; min-width: 0; height: 38px; background: var(--field); border: 2px solid #333a45; border-radius: 5px; }
.select::after { content: ""; position: absolute; right: 8px; top: 50%; margin-top: -5px; border: solid transparent; border-width: 8px 6px 0; border-top-color: #d8dadd; pointer-events: none; }
.select select { appearance: none; flex: 1; min-width: 0; border: 0; background: none; color: #fff; opacity: 1; font: 500 22px/28px Inter, sans-serif; padding: 0 20px 0 12px; }
.marks { position: absolute; left: 16px; top: 0; height: 100%; display: flex; align-items: center; pointer-events: none; }
.wide { flex: 0 0 56px; margin: 0 0 0 -2px; color: #70788a; }
.wide .marks { left: 20px; gap: 14px; }
.wide select { padding-left: 161px; }
.tall { flex: 0 0 54px; margin-right: 2px; }
.hide { display: flex; align-items: center; gap: 23px; height: 56px; padding: 0 0 5px 7px; color: #c9ccd0; font-weight: 400; }
.tablebox { flex: 1; min-height: 0; margin-right: 5px; border: 2px solid #2c313d; background: #4f596c; overflow: hidden; }
table { width: 100%; table-layout: fixed; border-collapse: collapse; }
.c1 { width: 64px; } .c2 { width: 115px; } .c3 { width: 44px; } .c4 { width: 94px; }
th { height: 46px; padding: 0; background: var(--dark); border-right: 2px solid #2c313c; border-bottom: 2px solid #2c313c; color: var(--fg); }
th > svg { margin: 0 auto; }
th:last-child > svg { margin-left: 35px; }
.sorted { background: linear-gradient(#505b6e, #505b6e); position: relative; font-weight: 600; }
.sorted span { display: flex; align-items: center; justify-content: space-between; padding: 0 13px 0 8px; }
.sorted::after { content: ""; position: absolute; left: 50px; bottom: 0; border: solid transparent; border-width: 0 6px 9px; border-bottom-color: #4f92e6; }
td { height: 38px; padding: 0; background: #919dae; color: #fff; white-space: nowrap; }
td:first-child .dot { display: block; margin-left: 29px; }
td .swatch { vertical-align: -2px; margin: 0 19px 0 0; }
td:nth-child(5) { padding-left: 14px; }
td .rule { margin-left: 15px; }
.hscroll { flex: none; height: 32px; margin-right: 5px; padding: 13px 4px 0; border: solid #39404c; border-width: 0 2px 2px; }
.hscroll i { display: block; width: 84%; height: 10px; border-radius: 5px; background: #8a9099; }
.lactions { flex: none; height: 51px; display: flex; align-items: center; padding: 0 16px 0 15px; gap: 31px; }
.lactions button:nth-child(5) { margin-left: auto; }
.search { flex: none; display: flex; align-items: center; gap: 8px; height: 40px; margin: 0 6px 17px 2px; padding-left: 8px; background: #fff; border-radius: 9px; }
.search input { flex: 1; min-width: 0; border: 0; padding: 0; background: none; font: 400 24px/30px Inter, sans-serif; outline: 0; }
.search input::placeholder { color: #bcbcbe; opacity: 1; }
.props { flex: 1; min-height: 0; display: flex; flex-direction: column; padding: 0 17px 16px 20px; }
.props header { flex: none; gap: 20px; height: 32px; }
.seg { display: flex; width: 120px; height: 28px; border: 2px solid #2e3440; font: 400 18px/24px Inter, sans-serif; }
.seg button { flex: 1; color: #858b96; border-right: 2px solid #2e3440; }
.seg .on { background: #4f5a70; color: #fff; border: 0; }
.model { flex: 0 0 42px; margin-top: 16px; background: #434b5b; border-color: #404856; }
.model select { color: #808894; } .model::after { border-top-color: #808894; }
.rows { flex: 1; min-height: 0; overflow: hidden; display: flex; justify-content: space-between; margin-top: 12px; }
.list { display: flex; flex-direction: column; gap: 8px; padding-left: 46px; }
.row { display: flex; gap: 20px; width: 362px; height: 38px; flex: none; align-items: center; }
.row label { width: 134px; flex: none; text-align: right; white-space: nowrap; }
.row .select, .row > input { flex: 1; }
.row input { min-width: 0; height: 38px; background: var(--field); border: 2px solid #333a45; border-radius: 5px; color: #fff; font: 500 22px/28px Inter, sans-serif; padding: 0 6px; }
.sw1 select { padding-left: 56px; } .lt select { padding-left: 106px; padding-right: 0; } .lt .marks { left: 13px; } .lt .rule { width: 64px; }
.trans { flex: 1; min-width: 0; display: flex; gap: 6px; align-items: center; padding-left: 6px; }
.row .trans input { flex: 1; height: 34px; border-radius: 0; text-align: right; background: linear-gradient(#848b99, #848b99) 53px 100% / 1px 12px no-repeat, linear-gradient(#6d9be6 5px, transparent 5px 25px, #6d9be6 25px) 0 0 / 3px 100% no-repeat, var(--field); }
.row .trans .select { flex: 0 0 78px; } .trans .marks { left: 13px; }
.vthumb { width: 10px; height: 305px; border-radius: 5px; background: #8a8f99; }

footer { flex: none; display: flex; justify-content: space-between; height: 48px; border-top: 2px solid var(--line); border-bottom: 3px solid #2a303c; border-left: 1px solid var(--line); background: var(--bar); }
.layouts { display: flex; color: #a9adb4; font-weight: 400; }
.layouts button { display: flex; align-items: center; justify-content: center; width: 120px; border-right: 2px solid var(--line); }
.layouts button:first-child { width: 119px; background: #505a72; color: #fff; font-weight: 600; }
.layouts button:nth-child(2) { width: 48px; } .layouts button:nth-child(3) { width: 116px; }
.status { display: flex; align-items: center; border-left: 2px solid var(--line); padding-right: 5px; color: #aeb2b8; font-weight: 400; }
.status button { width: 44px; height: 40px; display: flex; align-items: center; justify-content: center; }
.status svg { width: 32px; height: 32px; fill: var(--fg); }
.status .on { width: 40px; margin: 0 2px; background: #6489bd; }
.coords { width: 229px; padding-left: 10px; white-space: nowrap; }
.status .scale { width: 56px; gap: 8px; }
.status .scale .tri { border-width: 9px 6px 0; }
```
